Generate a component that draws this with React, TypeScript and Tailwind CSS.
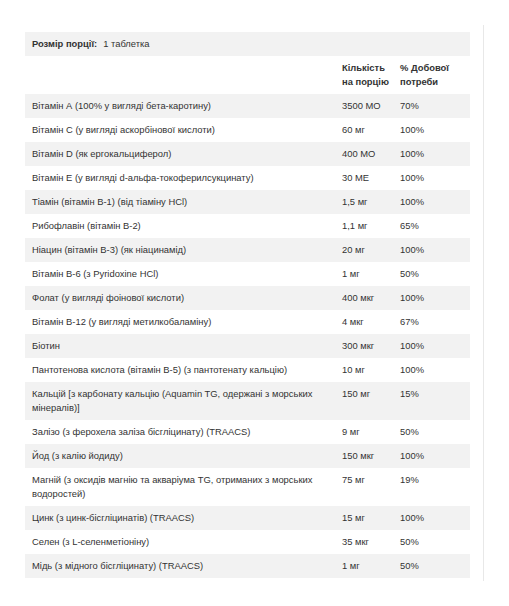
import React from "react";

type Row = { name: string; amount: string; dv: string };

const rows: Row[] = [
  { name: "Вітамін А (100% у вигляді бета-каротину)", amount: "3500 МО", dv: "70%" },
  { name: "Вітамін С (у вигляді аскорбінової кислоти)", amount: "60 мг", dv: "100%" },
  { name: "Вітамін D (як ергокальциферол)", amount: "400 МО", dv: "100%" },
  { name: "Вітамін Е (у вигляді d-альфа-токоферилсукцинату)", amount: "30 МЕ", dv: "100%" },
  { name: "Тіамін (вітамін B-1) (від тіаміну HCl)", amount: "1,5 мг", dv: "100%" },
  { name: "Рибофлавін (вітамін В-2)", amount: "1,1 мг", dv: "65%" },
  { name: "Ніацин (вітамін В-3) (як ніацинамід)", amount: "20 мг", dv: "100%" },
  { name: "Вітамін В-6 (з Pyridoxine HCl)", amount: "1 мг", dv: "50%" },
  { name: "Фолат (у вигляді фоінової кислоти)", amount: "400 мкг", dv: "100%" },
  { name: "Вітамін В-12 (у вигляді метилкобаламіну)", amount: "4 мкг", dv: "67%" },
  { name: "Біотин", amount: "300 мкг", dv: "100%" },
  { name: "Пантотенова кислота (вітамін В-5) (з пантотенату кальцію)", amount: "10 мг", dv: "100%" },
  { name: "Кальцій [з карбонату кальцію (Aquamin TG, одержані з морських мінералів)]", amount: "150 мг", dv: "15%" },
  { name: "Залізо (з ферохела заліза бісгліцинату) (TRAACS)", amount: "9 мг", dv: "50%" },
  { name: "Йод (з калію йодиду)", amount: "150 мкг", dv: "100%" },
  { name: "Магній (з оксидів магнію та акваріума TG, отриманих з морських водоростей)", amount: "75 мг", dv: "19%" },
  { name: "Цинк (з цинк-бісгліцинатів) (TRAACS)", amount: "15 мг", dv: "100%" },
  { name: "Селен (з L-селенметіоніну)", amount: "35 мкг", dv: "50%" },
  { name: "Мідь (з мідного бісгліцинату) (TRAACS)", amount: "1 мг", dv: "50%" },
];

export default function App() {
  return (
    <div
      className="w-[509px] h-[606px] bg-white pt-[25px] text-[#333] text-[9.4px] leading-[14px]"
      style={{ fontFamily: '"Liberation Sans", Arial, sans-serif' }}
    >
      <div className="w-[484px] h-[556px] pt-[7px] pl-[25px] border-r border-[#e8e8e8]">
        <div className="w-[445px]">
          <div className="bg-[#f2f2f2] px-[7px] py-[5px]">
            <span className="font-bold">Розмір порції:</span>
            <span className="ml-[6px]">1 таблетка</span>
          </div>
          <div className="grid grid-cols-[310px_58px_77px] font-bold">
            <div className="px-[7px] py-[5px]"></div>
            <div className="pl-[7px] py-[5px] whitespace-nowrap">
              Кількість
              <br />
              на порцію
            </div>
            <div className="px-[7px] py-[5px] whitespace-nowrap">
              % Добової
              <br />
              потреби
            </div>
          </div>
          {rows.map((r, i) => (
            <div
              key={i}
              className={
                "grid grid-cols-[310px_58px_77px] " + (i % 2 === 0 ? "bg-[#f2f2f2]" : "bg-white")
              }
            >
              <div className="pl-[7px] pr-[20px] py-[5px]">{r.name}</div>
              <div className="pl-[7px] py-[5px]">{r.amount}</div>
              <div className="px-[7px] py-[5px]">{r.dv}</div>
            </div>
          ))}
        </div>
      </div>
    </div>
  );
}
